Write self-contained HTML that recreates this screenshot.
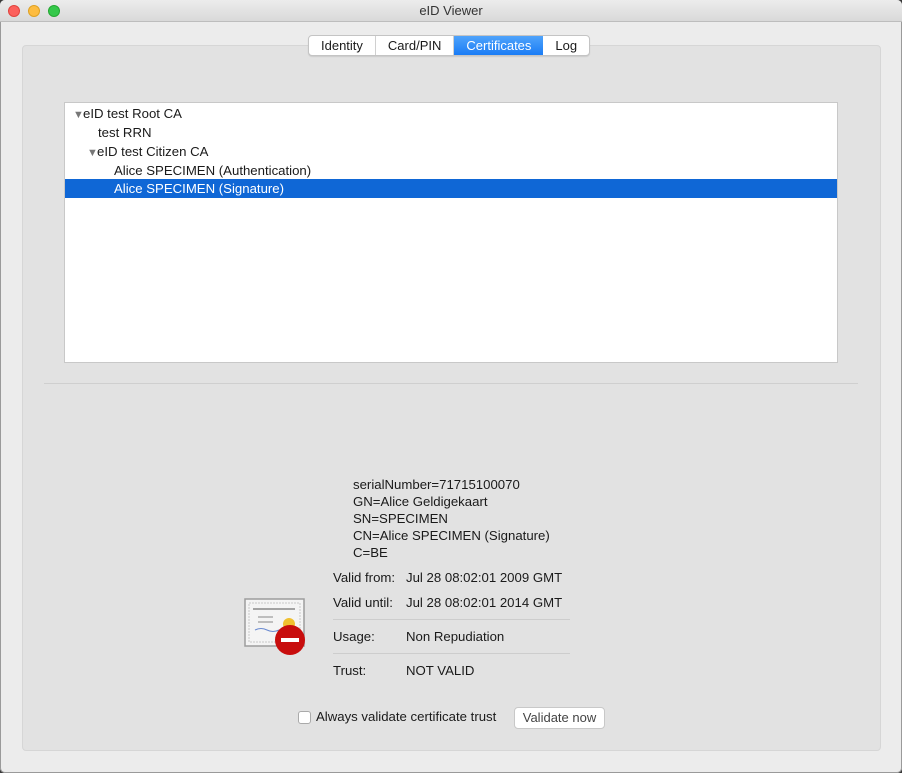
<!DOCTYPE html>
<html><head><meta charset="utf-8"><style>
*{box-sizing:border-box;margin:0;padding:0}
body{width:902px;height:773px;background:#3a3a3a;font-family:"Liberation Sans",sans-serif;font-size:13px;color:#1a1a1a;position:relative;overflow:hidden}
.win{position:absolute;left:0;top:0;width:902px;height:773px;background:#ececec;border-radius:5px;overflow:hidden;box-shadow:inset 0 0 0 1px #9a9a9a}
.title{position:absolute;left:0;top:0;width:100%;height:22px;background:linear-gradient(#ececec,#d9d9d9);border-bottom:1px solid #bdbdbd;text-align:center;line-height:22px;color:#333;font-size:13px}
.dot{position:absolute;top:5px;width:12px;height:12px;border-radius:50%}
.pane{position:absolute;left:22px;top:45px;width:859px;height:706px;background:#e2e2e2;border:1px solid #d6d6d6;border-radius:4px}
.tabs{position:absolute;left:308px;top:35px;height:21px;display:flex;border:1px solid #c4c4c4;border-radius:4px;background:#fff;overflow:hidden;box-shadow:0 1px 1px rgba(0,0,0,.1)}
.tabs div{padding:0 12px;line-height:19px;border-right:1px solid #d0d0d0;font-size:13px}
.tabs .sel{background:linear-gradient(#4fa3fb,#1a7cf5);color:#fff;border-right:none}
.tree{position:absolute;left:64px;top:102px;width:774px;height:261px;background:#fff;border:1px solid #c8c8c8}
.row{position:absolute;left:0;width:100%;height:19px;line-height:19px;font-size:13.2px}
.tri{font-size:11px;color:#777;display:inline-block;width:10px}
.sepl{position:absolute;left:44px;top:383px;width:814px;height:1px;background:#cfcfcf}
.t{position:absolute;white-space:nowrap;font-size:13.2px}
.hl{position:absolute;left:333px;width:237px;height:1px;background:#cdcdcd}
</style></head><body>
<div class="win">
<div class="title">eID Viewer
<div class="dot" style="left:8px;background:#fc605c;border:1px solid #e0443e"></div>
<div class="dot" style="left:28px;background:#fdbc40;border:1px solid #dea123"></div>
<div class="dot" style="left:48px;background:#34c84a;border:1px solid #24a732"></div>
</div>
<div class="pane"></div>
<div class="tabs"><div>Identity</div><div>Card/PIN</div><div class="sel">Certificates</div><div style="border-right:none">Log</div></div>
<div class="tree">
<div class="row" style="top:1px;padding-left:8px"><span class="tri">▼</span>eID test Root CA</div>
<div class="row" style="top:20px;padding-left:33px">test RRN</div>
<div class="row" style="top:39px;padding-left:22px"><span class="tri">▼</span>eID test Citizen CA</div>
<div class="row" style="top:58px;padding-left:49px">Alice SPECIMEN (Authentication)</div>
<div class="row" style="top:76px;padding-left:49px;background:#0f67d6;color:#fff">Alice SPECIMEN (Signature)</div>
</div>
<div class="sepl"></div>
<div class="t" style="left:353px;top:477px">serialNumber=71715100070</div>
<div class="t" style="left:353px;top:494px">GN=Alice Geldigekaart</div>
<div class="t" style="left:353px;top:511px">SN=SPECIMEN</div>
<div class="t" style="left:353px;top:528px">CN=Alice SPECIMEN (Signature)</div>
<div class="t" style="left:353px;top:545px">C=BE</div>
<div class="t" style="left:333px;top:570px">Valid from:</div><div class="t" style="left:406px;top:570px">Jul 28 08:02:01 2009 GMT</div>
<div class="t" style="left:333px;top:595px">Valid until:</div><div class="t" style="left:406px;top:595px">Jul 28 08:02:01 2014 GMT</div>
<div class="hl" style="top:619px"></div>
<div class="t" style="left:333px;top:629px">Usage:</div><div class="t" style="left:406px;top:629px">Non Repudiation</div>
<div class="hl" style="top:653px"></div>
<div class="t" style="left:333px;top:663px">Trust:</div><div class="t" style="left:406px;top:663px">NOT VALID</div>
<svg style="position:absolute;left:243px;top:597px" width="66" height="60">
<rect x="2" y="2" width="59" height="47" fill="#f4f4f4" stroke="#9c9c9c" stroke-width="1.5"/>
<rect x="6" y="6" width="51" height="39" fill="none" stroke="#c8c8c8" stroke-dasharray="2,1"/>
<line x1="10" y1="12" x2="52" y2="12" stroke="#888" stroke-width="1.5"/>
<line x1="15" y1="20" x2="30" y2="20" stroke="#888"/>
<line x1="15" y1="25" x2="30" y2="25" stroke="#888"/>
<path d="M12 33 q6 -3 12 0 t12 0" stroke="#6a8ad0" fill="none"/>
<circle cx="46" cy="27" r="6" fill="#f0c030"/>
<circle cx="47" cy="43" r="15" fill="#c80d0d"/>
<rect x="38" y="41" width="18" height="4" fill="#fff"/>
</svg>
<div style="position:absolute;left:298px;top:711px;width:13px;height:13px;background:#fff;border:1px solid #aaa;border-radius:3px"></div>
<div class="t" style="left:316px;top:709px">Always validate certificate trust</div>
<div style="position:absolute;left:514px;top:707px;width:91px;height:22px;background:#fff;border:1px solid #c8c8c8;border-radius:4px;text-align:center;line-height:20px;color:#444">Validate now</div>
</div>
</body></html>
